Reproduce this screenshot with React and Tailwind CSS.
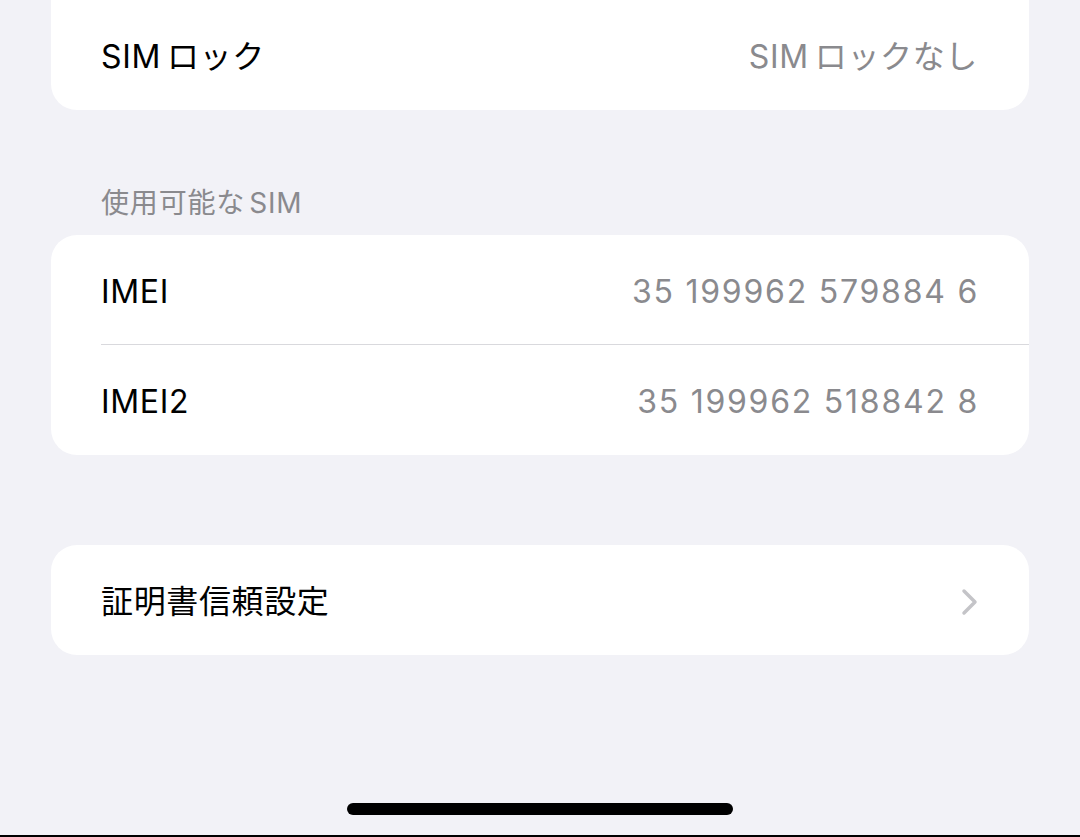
import React from 'react';

const font = { fontFamily: 'Inter, "Noto Sans CJK JP", sans-serif' };

// "SIM" followed by kana gets a little breathing room, like iOS autospacing
const Sim = ({ children }) => (
    <>
        <span className="mr-[6px]">SIM</span>
        {children}
    </>
);

// One settings row: label on the left, value or chevron on the right
const Row = ({ label, value, chevron, divider, mono }) => (
    <div className="relative flex h-[110px] items-center justify-between pl-[50px] pr-[52px] pt-[4px]">
        <span className="text-[32px] leading-none tracking-[0.02em] text-black">{label}</span>
        {value && (
            <span
                className={
                    mono
                        ? '-mr-[2px] text-[32px] leading-none tracking-[0.055em] text-[#8a8a8e]'
                        : '-mr-[1px] text-[32px] leading-none tracking-[0.02em] text-[#8a8a8e]'
                }
            >
                {value}
            </span>
        )}
        {chevron && (
            <svg width="18" height="28" viewBox="0 0 18 28" fill="none" className="-mr-[2px]">
                <path d="M3 3l11 11-11 11" stroke="#c4c4c8" strokeWidth="3.5" strokeLinecap="round" strokeLinejoin="round" />
            </svg>
        )}
        {divider && <div className="absolute bottom-0 left-[50px] right-0 h-px bg-[#d9d9dd]" />}
    </div>
);

const App = () => {
    return (
        <div className="flex h-[837px] w-full flex-col bg-[#f2f2f7] px-[51px]" style={font}>
            {/* card scrolled partly out of view */}
            <div className="rounded-b-[26px] bg-white">
                <Row label={<Sim>ロック</Sim>} value={<Sim>ロックなし</Sim>} />
            </div>

            <div className="flex h-[125px] items-end pb-[15px] pl-[50px]">
                <span className="text-[28px] leading-[34px] tracking-[0.03em] text-[#8a8a8e]">
                    使用可能な<span className="ml-[4px]">SIM</span>
                </span>
            </div>

            <div className="overflow-hidden rounded-[26px] bg-white">
                <Row label="IMEI" value="35 199962 579884 6" mono divider />
                <Row label="IMEI2" value="35 199962 518842 8" mono />
            </div>

            <div className="mt-[90px] overflow-hidden rounded-[26px] bg-white">
                <Row label="証明書信頼設定" chevron />
            </div>

            {/* home indicator */}
            <div className="mt-auto flex justify-center pb-[20px]">
                <div className="h-[12px] w-[386px] rounded-full bg-black" />
            </div>
            <div className="-mx-[51px] h-[2px] bg-black" />
        </div>
    );
};

export default App;
